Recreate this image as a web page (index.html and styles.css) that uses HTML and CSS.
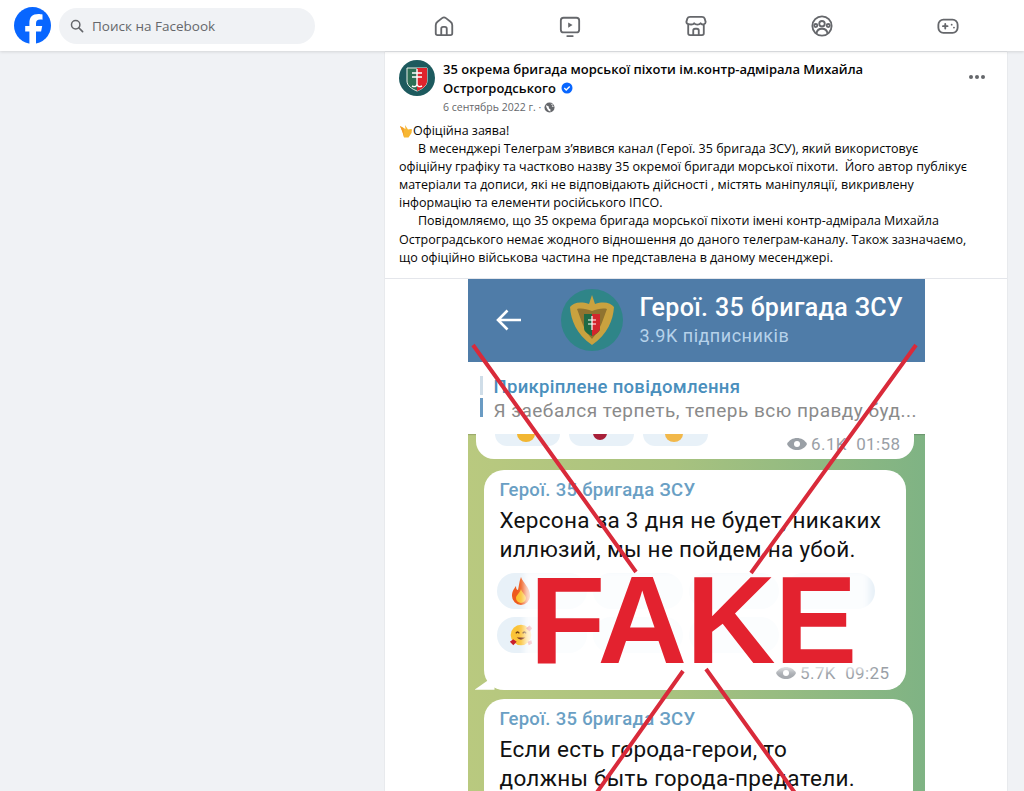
FILE: index.html
```html
<!DOCTYPE html>
<html lang="uk">
<head>
<meta charset="utf-8">
<title>Facebook</title>
<link rel="stylesheet" href="styles.css">
</head>
<body>
<header class="topbar">
  <svg class="fb-logo" viewBox="0 0 37 37"><circle cx="18.5" cy="18.5" r="18.5" fill="#0866ff"/><path d="M15.4 37V24.6h-4.2v-5.7h4.2v-2.6c0-6.3 2.9-9.3 9.1-9.3 1.2 0 3.2.2 4 .5v5.2c-.4 0-1.2-.1-2.2-.1-3.1 0-4.3 1.2-4.3 4.2v2.1h6.2l-1.1 5.7h-5.1V37z" fill="#fff"/></svg>
  <div class="search">
    <svg class="search-icon" viewBox="0 0 16 16"><circle cx="6.5" cy="6.5" r="4.8" fill="none" stroke="#65676b" stroke-width="1.7"/><path d="M10 10l4.4 4.4" stroke="#65676b" stroke-width="1.9" stroke-linecap="round"/></svg>
    <span>Поиск на Facebook</span>
  </div>
  <nav class="nav">
    <div class="nav-item"><svg viewBox="0 0 24 24" class="nav-icon"><path d="M3 20V11.2c0-1.6.6-2.8 1.9-3.8l5-4c1.300-1 2.900-1 4.200 0l5 4c1.300 1 1.900 2.200 1.900 3.800V20c0 1.100-.9 2-2 2H5c-1.100 0-2-.9-2-2z"/><path d="M9 22v-7c0-1.100.9-2 2-2h2c1.100 0 2 .9 2 2v7"/></svg></div>
    <div class="nav-item"><svg viewBox="0 0 24 24" class="nav-icon"><rect x="2" y="3" width="20" height="16" rx="3"/><path d="M9 23h6" /><path d="M10 8.200v5.600l4.800-2.800z" class="fill"/></svg></div>
    <div class="nav-item"><svg viewBox="0 0 24 24" class="nav-icon"><path d="M5.500 2h13c1.500 0 2.500.7 3 2l1 3.500c0 3-4 3.800-5.500 1.500-1.300 2-5.700 2-7 0C8.500 11.300 1.500 10.500 1.500 7.500l1-3.500c.5-1.300 1.500-2 3-2z"/><path d="M3.500 11v9c0 1.100.9 2 2 2h13c1.100 0 2-.9 2-2v-9"/><path d="M9 22v-5c0-1.100.9-2 2-2h2c1.100 0 2 .9 2 2v5"/></svg></div>
    <div class="nav-item"><svg viewBox="0 0 24 24" class="nav-icon"><circle cx="12" cy="12" r="10.500"/><circle cx="12" cy="9.500" r="3"/><path d="M6 20c.5-3.500 2.500-5 6-5s5.500 1.500 6 5"/><circle cx="5.200" cy="11.500" r="1.700"/><circle cx="18.800" cy="11.500" r="1.700"/></svg></div>
    <div class="nav-item"><svg viewBox="0 0 24 24" class="nav-icon"><rect x="1.500" y="5" width="21" height="14.500" rx="5.500"/><path d="M6.500 12.200h5M9 9.700v5"/><circle cx="16" cy="10.500" r="1" class="fill"/><circle cx="18.500" cy="13.700" r="1" class="fill"/></svg></div>
  </nav>
</header>

<main class="page">
  <article class="post">
    <div class="post-head">
      <svg class="avatar" viewBox="0 0 36 36"><circle cx="18" cy="18" r="18" fill="#1d5a5e"/><path d="M8 8h20v13c0 5-5 8-10 10-5-2-10-5-10-10z" fill="#2d6f55" stroke="#e9efe9" stroke-width="1"/><path d="M18 8h10v13c0 5-5 8-10 10z" fill="#e0242c"/><path d="M13 13h10M13 17h10M18 9v15c0 3-3 3-5 2M18 24c0 3 3 3 5 2" fill="none" stroke="#fff" stroke-width="1.400"/></svg>
      <div class="post-meta">
        <div class="post-name">35 окрема бригада морської піхоти ім.контр-адмірала Михайла<br>Острогродського<svg class="verified" viewBox="0 0 12 12"><circle cx="6" cy="6" r="5.500" fill="#0866ff"/><path d="M3.300 6.100l1.900 1.900 3.500-3.600" fill="none" stroke="#fff" stroke-width="1.400"/></svg></div>
        <div class="post-date">6 сентябрь 2022 г. · <svg class="globe" viewBox="0 0 12 12"><circle cx="6" cy="6" r="5.500" fill="#65676b"/><path d="M2 3.500l3 1 .5 2.500 1.500 1v2.500L4.500 9 3 6.500zM7 1.500l2.500 1-1 2.500 2.500.5" fill="#fff"/></svg></div>
      </div>
      <div class="more"><i></i><i></i><i></i></div>
    </div>
    <div class="post-text">
      <p><svg class="hand" viewBox="0 0 14 14"><path d="M1 2l5.500 3L6 1l3 4.500 3-.5 1 .5-.5 3.500-3 4.500H5L3.500 8z" fill="#f7b733"/><path d="M5 13l-1.500-5L1 2l3.500 2z" fill="#f39c2a"/></svg>Офіційна заява!</p>
      <p><span class="indent"></span>В месенджері Телеграм з’явився канал (Герої. 35 бригада ЗСУ), який використовує</p>
      <p>офіційну графіку та частково назву 35 окремої бригади морської піхоти.&nbsp; Його автор публікує</p>
      <p>матеріали та дописи, які не відповідають дійсності , містять маніпуляції, викривлену</p>
      <p>інформацію та елементи російського ІПСО.</p>
      <p><span class="indent"></span>Повідомляємо, що 35 окрема бригада морської піхоти імені контр-адмірала Михайла</p>
      <p>Остроградського немає жодного відношення до даного телеграм-каналу. Також зазначаємо,</p>
      <p>що офіційно військова частина не представлена в даному месенджері.</p>
    </div>
    <div class="media">
      <div class="shot">
        <div class="tg-head">
          <svg class="tg-back" viewBox="0 0 26 22"><path d="M25 11H2M11.500 1.500L2 11l9.500 9.500" fill="none" stroke="#fff" stroke-width="2.600"/></svg>
          <svg class="tg-avatar" viewBox="0 0 62 62"><circle cx="31" cy="31" r="31" fill="#2f8588"/><path d="M31 6l3 9c9-3 16-1 19 3-1 13-6 27-22 38C15 45 10 31 9 18c3-4 10-6 19-3z" fill="#c9a23f"/><path d="M16 20c4 10 6 20 15 30 9-10 11-20 15-30-4-1-10 0-15 2-5-2-11-3-15-2z" fill="#8f7330"/><path d="M23 25h16v14c0 4-4 6-8 8-4-2-8-4-8-8z" fill="#1f6b45"/><path d="M31 25h8v14c0 4-4 6-8 8z" fill="#d3262c"/><path d="M27 31h8M27 35h8M31 27v14" stroke="#fff" stroke-width="1.200"/></svg>
          <div class="tg-title">
            <div class="tg-name">Герої. 35 бригада ЗСУ</div>
            <div class="tg-subs">3.9K підписників</div>
          </div>
        </div>
        <div class="tg-pin">
          <div class="pin-bars"><i></i><i class="on"></i></div>
          <div class="pin-text">
            <div class="pin-title">Прикріплене повідомлення</div>
            <div class="pin-msg">Я заебался терпеть, теперь всю правду буд...</div>
          </div>
        </div>
        <div class="chat">
          <div class="bubble bubble-cut">
            <div class="cut-row">
              <span class="pill"><i class="dot yellow"></i></span><span class="pill"><i class="dot red"></i></span><span class="pill"><i class="dot orange"></i></span>
              <span class="stamp cut-stamp"><svg class="eye" viewBox="0 0 22 14"><path d="M1 7c4-8 16-8 20 0-4 8-16 8-20 0z" fill="#9aa0a6"/><circle cx="11" cy="7" r="3" fill="#fff"/></svg>6.1K&nbsp; 01:58</span>
            </div>
          </div>
          <div class="bubble bubble-two">
            <div class="b-author">Герої. 35 бригада ЗСУ</div>
            <div class="b-text">Херсона за 3 дня не будет, никаких<br>иллюзий, мы не пойдем на убой.</div>
            <div class="reacts">
              <span class="pill wide"><svg viewBox="0 0 24 30" class="emo"><path d="M12 1c2 6 9 10 9 19a9 9 0 0 1-18 0c0-5 2-7 4-10 0 3 1 4 2 4 1-4 1-8 3-13z" fill="#ee5a1c"/><path d="M12 13c1 4 5 6 5 9a5 5 0 0 1-10 0c0-3 4-5 5-9z" fill="#fbc02d"/></svg></span>
              <span class="pill wide"></span><span class="pill wide"></span><span class="pill wide"></span>
            </div>
            <div class="reacts">
              <span class="pill wide"><svg viewBox="0 0 28 28" class="emo"><circle cx="14" cy="14" r="12" fill="#fbc338"/><path d="M8 12q2-3 4 0M16 12q2-3 4 0" fill="none" stroke="#6b3a12" stroke-width="1.500"/><path d="M9 17q5 5 10 0z" fill="#7a2f16"/><path d="M1 22l4-3 4 3-4 4zM20 6l4-3 3 3-3 4zM22 22l4-2 1 4-4 2z" fill="#c8202c"/></svg></span>
              <span class="pill wide"></span><span class="pill wide"></span>
            </div>
            <div class="stamp two-stamp"><svg class="eye" viewBox="0 0 22 14"><path d="M1 7c4-8 16-8 20 0-4 8-16 8-20 0z" fill="#a7abb0"/><circle cx="11" cy="7" r="3" fill="#fff"/></svg>5.7K&nbsp; 09:25</div>
          </div>
          <div class="bubble bubble-three">
            <div class="b-author">Герої. 35 бригада ЗСУ</div>
            <div class="b-text">Если есть города-герои, то<br>должны быть города-предатели.</div>
          </div>
        </div>
        <div class="fake-veil"></div>
        <svg class="cross" viewBox="0 0 457 514">
          <path d="M5 66L168 293M238 390L340 532M448 66L283 294M215 392L110 540"/>
        </svg>
        <div class="fake">FAKE</div>
      </div>
    </div>
  </article>
</main>
</body>
</html>
```

FILE: styles.css
```css
* { box-sizing: border-box; }
html, body { margin: 0; height: 100%; overflow: hidden; }
body { background: #f0f2f5; font-family: "Open Sans", "Noto Sans", sans-serif; color: #050505; }

.topbar {
  position: relative; z-index: 2;
  display: flex; align-items: center;
  height: 51px; padding-left: 14px;
  background: #fff;
  box-shadow: 0 1px 3px rgba(0,0,0,.12);
}
.fb-logo { width: 37px; height: 37px; flex: none; }
.search {
  display: flex; align-items: center; gap: 8px;
  width: 256px; height: 36px; margin-left: 8px; padding-left: 11px;
  border-radius: 18px; background: #f0f2f5;
  color: #65676b; font-size: 13.500px;
}
.search-icon { width: 14px; height: 14px; }
.nav { display: flex; margin-left: 66px; }
.nav-item { width: 126px; display: flex; justify-content: center; }
.nav-icon { width: 22px; height: 22px; fill: none; stroke: #65676b; stroke-width: 2; stroke-linecap: round; stroke-linejoin: round; }
.nav-icon .fill { fill: #65676b; stroke: none; }

.page { padding-left: 385px; padding-top: 1px; }
.post { width: 622px; background: #fff; box-shadow: 0 0 1px rgba(0,0,0,.2); height: 800px; overflow: hidden; }

.post-head { display: flex; padding: 8px 14px 0; }
.avatar { width: 36px; height: 36px; flex: none; }
.post-meta { margin-left: 8px; flex: 1; }
.post-name { font-size: 13px; line-height: 19px; font-weight: 600; white-space: nowrap; }
.verified { width: 12px; height: 12px; margin-left: 5px; vertical-align: -1px; }
.post-date { font-size: 10.500px; line-height: 16px; margin-top: 1px; color: #65676b; }
.globe { width: 11px; height: 11px; vertical-align: -2px; }
.more { display: flex; gap: 2px; margin-top: 15px; margin-right: 8px; }
.more i { width: 4px; height: 4px; border-radius: 50%; background: #65676b; }

.post-text { padding: 7px 14px 11px; font-size: 12.500px; line-height: 18.100px; white-space: nowrap; }
.post-text p { margin: 0; }
.indent { display: inline-block; width: 19px; }
.hand { width: 14px; height: 14px; vertical-align: -3px; }

.media { display: flex; justify-content: center; border-top: 1px solid #e4e6eb; }
.shot { position: relative; width: 457px; height: 514px; overflow: hidden; font-family: Roboto, sans-serif; }

.tg-head { display: flex; align-items: center; height: 83px; background: #4f7ca8; box-shadow: 0 1px 1px rgba(0,0,0,.2); }
.tg-back { width: 26px; height: 22px; margin-left: 28px; flex: none; }
.tg-avatar { width: 62px; height: 62px; margin-left: 39px; flex: none; }
.tg-title { margin-left: 17px; }
.tg-name { color: #fff; font-size: 25px; line-height: 30px; font-weight: 500; white-space: nowrap; letter-spacing: .35px; }
.tg-subs { color: #b6d2ea; font-size: 18px; line-height: 22px; margin-top: 2px; letter-spacing: .5px; }

.tg-pin { display: flex; height: 72px; background: #fff; padding-top: 14px; padding-left: 12px; box-shadow: 0 1px 1px rgba(0,0,0,.15); position: relative; }
.pin-bars { display: flex; flex-direction: column; gap: 3px; width: 3px; }
.pin-bars i { display: block; height: 19px; width: 3px; background: #cfdde8; }
.pin-bars i.on { background: #6a9bc3; }
.pin-text { margin-left: 11px; white-space: nowrap; }
.pin-title { color: #4a8fbd; font-size: 18.500px; font-weight: 500; line-height: 22px; letter-spacing: .3px; }
.pin-msg { color: #8a8a8a; font-size: 19px; line-height: 26px; letter-spacing: .5px; }

.chat { height: 359px; padding-left: 16px; background: linear-gradient(90deg, #b9c97f 0%, #a8c27f 45%, #7fb384 100%); }
.bubble { background: #fff; position: relative; }
.bubble-cut { width: 438px; height: 25px; border-radius: 0 0 18px 18px; margin-left: -8px; }
.cut-row { display: flex; gap: 9px; padding-left: 19px; }
.pill { display: block; width: 65px; height: 12px; border-radius: 0 0 18px 18px; background: #e8f1f8; position: relative; overflow: hidden; }
.dot { position: absolute; left: 22px; top: -8px; width: 18px; height: 16px; border-radius: 50%; }
.dot.yellow { background: #f2b632; }
.dot.red { background: #a81f38; left: 24px; width: 14px; height: 14px; }
.dot.orange { background: #f2b84a; }
.stamp { color: #9aa0a6; font-size: 17px; display: flex; align-items: center; gap: 3px; letter-spacing: .4px; }
.eye { width: 22px; height: 14px; }
.cut-stamp { position: absolute; right: 13px; top: 1px; line-height: 18px; }

.bubble-two { width: 422px; height: 220px; margin-top: 11px; border-radius: 20px; padding: 8px 16px 0; }
.bubble-two::before { content: ""; position: absolute; left: -9px; bottom: 0; width: 20px; height: 14px; background: #fff; clip-path: polygon(100% 0, 100% 100%, 0 100%); }
.bubble-three { width: 429px; height: 110px; margin-top: 9px; border-radius: 20px; padding: 8px 16px 0; }
.b-author { color: #6a9fc4; font-size: 18.500px; line-height: 24px; font-weight: 500; letter-spacing: .3px; }
.b-text { margin-top: 4px; color: #111; font-size: 22.500px; line-height: 29.500px; white-space: nowrap; letter-spacing: .3px; }

.reacts { display: flex; gap: 9px; margin-top: 8px; }
.reacts + .reacts { margin-top: 8px; }
.pill.wide { width: 90px; height: 36px; border-radius: 18px; margin-left: -3px; display: flex; align-items: center; padding-left: 12px; }
.emo { width: 24px; height: 30px; }
.two-stamp { position: absolute; right: 16px; bottom: 7px; line-height: 20px; }

.fake-veil { position: absolute; left: 56px; top: 291px; width: 345px; height: 100px; background: rgba(255,255,255,.82); filter: blur(3px); }
.cross { position: absolute; left: 0; top: 0; width: 457px; height: 514px; fill: none; stroke: #d92a3a; stroke-width: 4; }
.fake {
  position: absolute; left: 62px; top: 271px;
  font-family: "Liberation Sans", Arial, sans-serif;
  font-weight: 700; font-size: 124px; line-height: 140px;
  color: #e3222f; letter-spacing: -1px;
}
```
